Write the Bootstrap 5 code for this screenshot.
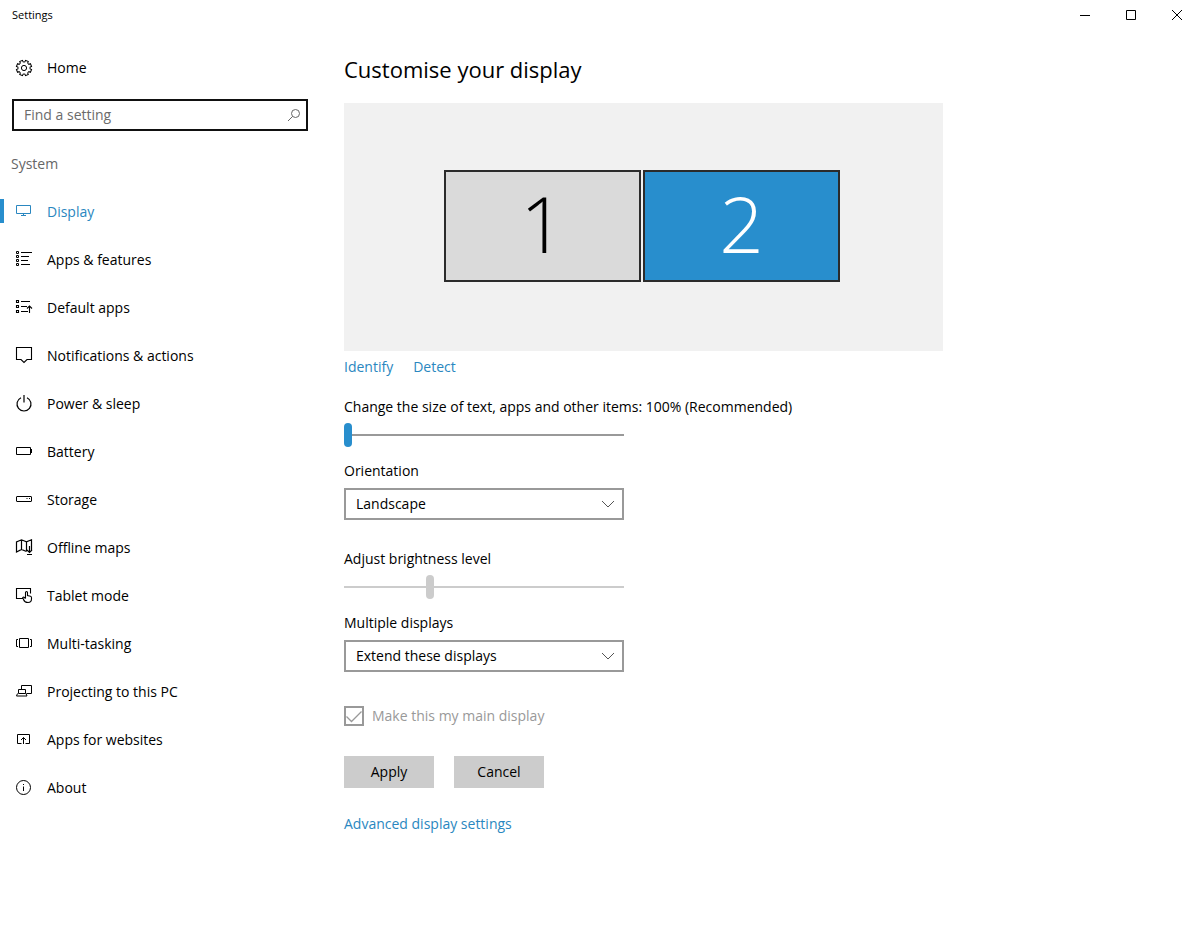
<!DOCTYPE html>
<html lang="en-GB">
<head>
<meta charset="utf-8">
<meta name="viewport" content="width=device-width, initial-scale=1">
<title>Settings</title>
<link href="https://cdn.jsdelivr.net/npm/bootstrap@5.3.0/dist/css/bootstrap.min.css" rel="stylesheet">
<style>
:root { --accent: #288ecd; --line: #999; --soft: #ccc; }
body { font-family: "Open Sans", "Noto Sans", sans-serif; font-size: 14px; line-height: 20px; color: #000; background: #fff; }
svg { flex: none; fill: none; stroke: currentColor; }
.titlebar { height: 30px; font-size: 11px; padding-left: 12px; }
.win-btn { width: 46px; height: 30px; border: 0; background: none; padding: 0; color: #000; }
.win-btn svg { display: block; margin: 0 auto; }
.side { width: 320px; }
.side .nav-link { height: 48px; padding: 0 0 0 15px; gap: 14px; color: #000; border-radius: 0; position: relative; }
.side .nav-link.active { color: #2a87c0; }
.side .nav-link.active::before { content: ""; position: absolute; left: 0; top: 11px; width: 4px; height: 24px; background: var(--accent); }
.home-link { margin-top: 14px; }
.search-box { margin: 7px 12px 0; height: 32px; border: 2px solid #111; padding: 0 5px 0 10px; color: #666; }
.search-box input { border: 0; outline: 0; background: none; padding: 0; color: #000; }
.search-box input::placeholder { color: #6b6b6b; opacity: 1; }
.group-name { font-size: 14px; line-height: 48px; margin: 9px 0 0 11px; color: #666; font-weight: 400; }
.content { padding: 21px 24px 24px; }
h1 { font-size: 22px; line-height: 36px; margin: 0 0 16px; font-weight: 400; }
.preview { max-width: 599px; height: 248px; padding: 0 3px 2px 0; background: #f1f1f1; gap: 2px; }
.monitor { width: 197px; height: 112px; border: 2px solid #2b2b2b; background: #dadada; color: #000; font-size: 78px; line-height: 98px; font-weight: 300; padding: 0 0 6px; }
.monitor.selected { background: var(--accent); color: #fff; }
.content a { color: #2a87c0; text-decoration: none; }
.links { margin-top: 6px; gap: 20px; margin-bottom: 20px; }
.controls { max-width: 280px; }
.controls label { white-space: nowrap; }
.slider { appearance: none; -webkit-appearance: none; display: block; width: 100%; height: 24px; margin: 6px 0 14px; background: none; }
.slider::-webkit-slider-runnable-track { height: 24px; background: linear-gradient(var(--line), var(--line)) center / 100% 2px no-repeat; }
.slider::-webkit-slider-thumb { -webkit-appearance: none; width: 8px; height: 24px; border-radius: 4px; background: var(--accent); }
.slider:disabled::-webkit-slider-runnable-track { background-image: linear-gradient(var(--soft), var(--soft)); }
.slider:disabled::-webkit-slider-thumb { background: var(--soft); }
.controls .form-select { height: 32px; margin: 7px 0 29px; padding: 0 32px 0 10px; border: 2px solid var(--line); border-radius: 0; font-size: 14px; line-height: 20px; color: #000;
  background-image: url("data:image/svg+xml,%3Csvg xmlns='http://www.w3.org/2000/svg' width='14' height='8' fill='none' stroke='%23555'%3E%3Cpath d='M1 1l6 6 6-6'/%3E%3C/svg%3E"); background-size: 14px 8px; background-position: right 7px center; }
.main-check { margin-top: 34px; gap: 8px; }
.main-check input { appearance: none; width: 20px; height: 20px; margin: 0; border: 2px solid var(--line);
  background: url("data:image/svg+xml,%3Csvg xmlns='http://www.w3.org/2000/svg' width='16' height='16' fill='none' stroke='%23999' stroke-width='1.3'%3E%3Cpath d='M.5 8.500l5 5L15.500 3.500'/%3E%3C/svg%3E") center no-repeat; }
.main-check label { color: #999; }
.actions { margin: 30px 0 26px; gap: 20px; }
.actions .btn { width: 90px; height: 32px; padding: 0; border: 0; border-radius: 0; background: var(--soft); color: #000; font-size: 14px; line-height: 20px; }
</style>
</head>
<body class="d-flex flex-column min-vh-100">

<header class="titlebar d-flex align-items-center">
  <span class="me-auto">Settings</span>
  <button class="win-btn" type="button" aria-label="Minimise"><svg width="12" height="12"><path d="M2 6.500h10"/></svg></button>
  <button class="win-btn" type="button" aria-label="Maximise"><svg width="12" height="12"><path d="M2.500 1.500h9v9h-9z"/></svg></button>
  <button class="win-btn" type="button" aria-label="Close"><svg width="12" height="12"><path d="M2 1l10 10M12 1L2 11"/></svg></button>
</header>

<div class="d-flex flex-grow-1">
  <aside class="side flex-shrink-0">
    <a class="nav-link home-link d-flex align-items-center" href="#">
      <svg width="18" height="18" viewBox="-9 -9 18 18">
        <defs><path id="tooth" d="M-2.300-5.500L-1.500-6L-1.500-7.600H1.500L1.500-6L2.300-5.500"/></defs>
        <use href="#tooth" transform="rotate(22.500)"/><use href="#tooth" transform="rotate(67.500)"/><use href="#tooth" transform="rotate(112.500)"/><use href="#tooth" transform="rotate(157.500)"/><use href="#tooth" transform="rotate(202.500)"/><use href="#tooth" transform="rotate(247.500)"/><use href="#tooth" transform="rotate(292.500)"/><use href="#tooth" transform="rotate(337.500)"/>
        <circle r="2.600"/>
      </svg>Home</a>
    <div class="search-box d-flex align-items-center">
      <input class="flex-grow-1" type="search" placeholder="Find a setting" aria-label="Find a setting">
      <svg width="14" height="14"><circle cx="8.500" cy="5.500" r="4"/><path d="M5.600 8.400L1 13"/></svg>
    </div>
    <h2 class="group-name mb-0">System</h2>
    <nav class="nav flex-column" aria-label="System">
      <a class="nav-link active d-flex align-items-center" aria-current="page" href="#"><svg width="18" height="18"><path d="M1.500 2.500h14v8h-14zM8.500 10.500v2M6 12.500h5"/></svg>Display</a>
      <a class="nav-link d-flex align-items-center" href="#"><svg width="18" height="18"><path d="M1.500.5h2v2h-2zM1.500 4.500h2v2h-2zM1.500 8.500h2v2h-2zM1.500 12.500h2v2h-2zM6 1.500h11M6 5.500h8M6 9.500h7M6 13.500h9"/></svg>Apps &amp; features</a>
      <a class="nav-link d-flex align-items-center" href="#"><svg width="18" height="18"><path d="M1.500 1.500h2v2h-2zM1.500 6.500h2v2h-2zM1.500 11.500h2v2h-2zM6 2.500h9M6 7.500h6M6 12.500h7M14.500 14V7.500M12 9.500l2.500-2.500 2.500 2.500" stroke-width="1.100"/></svg>Default apps</a>
      <a class="nav-link d-flex align-items-center" href="#"><svg width="18" height="18"><path d="M1.500.5h15v12h-4.500l-3 3-3-3H1.500z" stroke-width="1.100"/></svg>Notifications &amp; actions</a>
      <a class="nav-link d-flex align-items-center" href="#"><svg width="18" height="18" stroke-width="1.200"><path d="M9 0v7.500M6 2.700a7 7 0 1 0 6 0"/></svg>Power &amp; sleep</a>
      <a class="nav-link d-flex align-items-center" href="#"><svg width="18" height="18"><path d="M1.500 4.500h14v7h-14zM16.500 6v4"/></svg>Battery</a>
      <a class="nav-link d-flex align-items-center" href="#"><svg width="18" height="18"><rect x="1.500" y="5.500" width="15" height="5" rx=".5"/><path d="M11.500 7.500h1M14 7.500h1"/></svg>Storage</a>
      <a class="nav-link d-flex align-items-center" href="#"><svg width="18" height="18" stroke-width="1.200"><path d="M11.500 12.500L6.500 10.500 1.500 13V3L6.500.8l5 2L16.500.8V11M6.500.8v9.700M11.500 2.800v9.500M14.500 7v6.500M12 11l2.500 2.500 2.500-2.500M12 15.500h5"/></svg>Offline maps</a>
      <a class="nav-link d-flex align-items-center" href="#"><svg width="18" height="18" stroke-width="1.100"><path d="M7.500 11.500h-6v-10h14v5M10.500 11.500V5.500q0-1 1-1t1 1V8.500l3 .8q1 .3 1 1.400V12q0 3.500-3.500 3.500t-4.500-3l-.8-1.800q.8-1 1.800-.2l1 1"/></svg>Tablet mode</a>
      <a class="nav-link d-flex align-items-center" href="#"><svg width="18" height="18"><path d="M4.500 3.500h9v9h-9zM3 4.500H1.500v7H3M15 4.500h1.500v7H15"/></svg>Multi-tasking</a>
      <a class="nav-link d-flex align-items-center" href="#"><svg width="18" height="18"><path d="M6.500 6V2.500h10v8h-5M3.500 10.500v-4h7v4zM2.500 10.500l-1 2.500h10.500l-1-2.500"/></svg>Projecting to this PC</a>
      <a class="nav-link d-flex align-items-center" href="#"><svg width="18" height="18"><path d="M6.500 12.500h-4v-9h12v9h-4M8.500 13V6.500M6 9l2.500-2.500L11 9"/></svg>Apps for websites</a>
      <a class="nav-link d-flex align-items-center" href="#"><svg width="18" height="18"><circle cx="8.500" cy="8.500" r="7"/><path d="M8.500 5v1M8.500 7.500V12"/></svg>About</a>
    </nav>
  </aside>

  <main class="content flex-grow-1">
    <h1>Customise your display</h1>
    <div class="preview d-flex align-items-center justify-content-center">
      <button class="monitor" type="button">1</button>
      <button class="monitor selected" type="button" aria-pressed="true">2</button>
    </div>
    <div class="links d-flex"><a href="#">Identify</a><a href="#">Detect</a></div>
    <form class="controls">
      <label class="d-block" for="scale">Change the size of text, apps and other items: 100% (Recommended)</label>
      <input class="slider" type="range" id="scale" min="0" max="100" value="0">
      <label class="d-block" for="orientation">Orientation</label>
      <select class="form-select" id="orientation"><option>Landscape</option><option>Portrait</option></select>
      <label class="d-block" for="brightness">Adjust brightness level</label>
      <input class="slider" type="range" id="brightness" min="0" max="100" value="30" disabled>
      <label class="d-block" for="multiple">Multiple displays</label>
      <select class="form-select mb-0" id="multiple"><option>Extend these displays</option><option>Duplicate these displays</option></select>
      <div class="main-check d-flex align-items-center">
        <input type="checkbox" id="maindisplay" checked disabled>
        <label for="maindisplay">Make this my main display</label>
      </div>
      <div class="actions d-flex">
        <button class="btn" type="button">Apply</button>
        <button class="btn" type="button">Cancel</button>
      </div>
      <a href="#">Advanced display settings</a>
    </form>
  </main>
</div>
<script src="https://cdn.jsdelivr.net/npm/bootstrap@5.3.0/dist/js/bootstrap.bundle.min.js"></script>
</body>
</html>
